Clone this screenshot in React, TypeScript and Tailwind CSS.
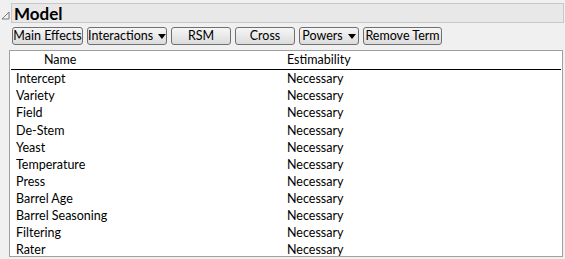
const rows = [
  "Intercept",
  "Variety",
  "Field",
  "De-Stem",
  "Yeast",
  "Temperature",
  "Press",
  "Barrel Age",
  "Barrel Seasoning",
  "Filtering",
  "Rater",
];

function Btn({ label, w, menu }: { label: string; w: string; menu?: boolean }) {
  return (
    <button
      className={`${w} flex h-[18px] items-center justify-center gap-[5px] whitespace-nowrap rounded-[3px] border border-[#707070] bg-gradient-to-b from-[#f6f6f6] to-[#dcdcdc] pt-[1px] text-[12.5px] leading-none text-black`}
    >
      <span>{label}</span>
      {menu && (
        <svg width="8" height="5" viewBox="0 0 8 5">
          <path d="M0 0h8L4 5z" fill="#000" />
        </svg>
      )}
    </button>
  );
}

export default function App() {
  return (
    <div
      className="h-[259px] w-[565px] bg-[#f0f0f0] pt-[3px]"
      style={{ fontFamily: 'Lato, "Noto Sans", sans-serif' }}
    >
      {/* Title */}
      <div className="flex items-center">
        <svg width="9" height="9" viewBox="0 0 9 9" className="ml-[1px] mt-[4px]">
          <path d="M8 1L1 8h7z" fill="none" stroke="#7a7a7a" strokeWidth="1" />
        </svg>
        <div className="ml-[1px] flex h-[20px] w-[553px] items-center border border-[#c8c8c8] bg-[#e8e8e8] pl-[2px] pt-[1px] text-[17px] font-bold leading-none text-black">
          Model
        </div>
      </div>

      {/* Buttons */}
      <div className="ml-[12px] mt-[4px] flex gap-[4px]">
        <Btn label="Main Effects" w="w-[71px]" />
        <Btn label="Interactions" w="w-[80px]" menu />
        <Btn label="RSM" w="w-[60px]" />
        <Btn label="Cross" w="w-[60px]" />
        <Btn label="Powers" w="w-[60px]" menu />
        <Btn label="Remove Term" w="w-[79px]" />
      </div>

      {/* Table */}
      <div className="ml-[9px] mt-[5px] h-[207px] w-[554px] border border-[#a0a0a0] bg-white px-[1px] text-[12.5px] leading-none text-black">
        <div className="flex h-[19px] items-center border-b border-black pt-[1px]">
          <div className="w-[274px] pl-[33px]">Name</div>
          <div className="pl-[2px]">Estimability</div>
        </div>
        {rows.map((r) => (
          <div key={r} className="flex h-[17.1px] items-center whitespace-nowrap pt-[2px]">
            <div className="w-[274px] pl-[5px]">{r}</div>
            <div className="pl-[2px]">Necessary</div>
          </div>
        ))}
      </div>
    </div>
  );
}
